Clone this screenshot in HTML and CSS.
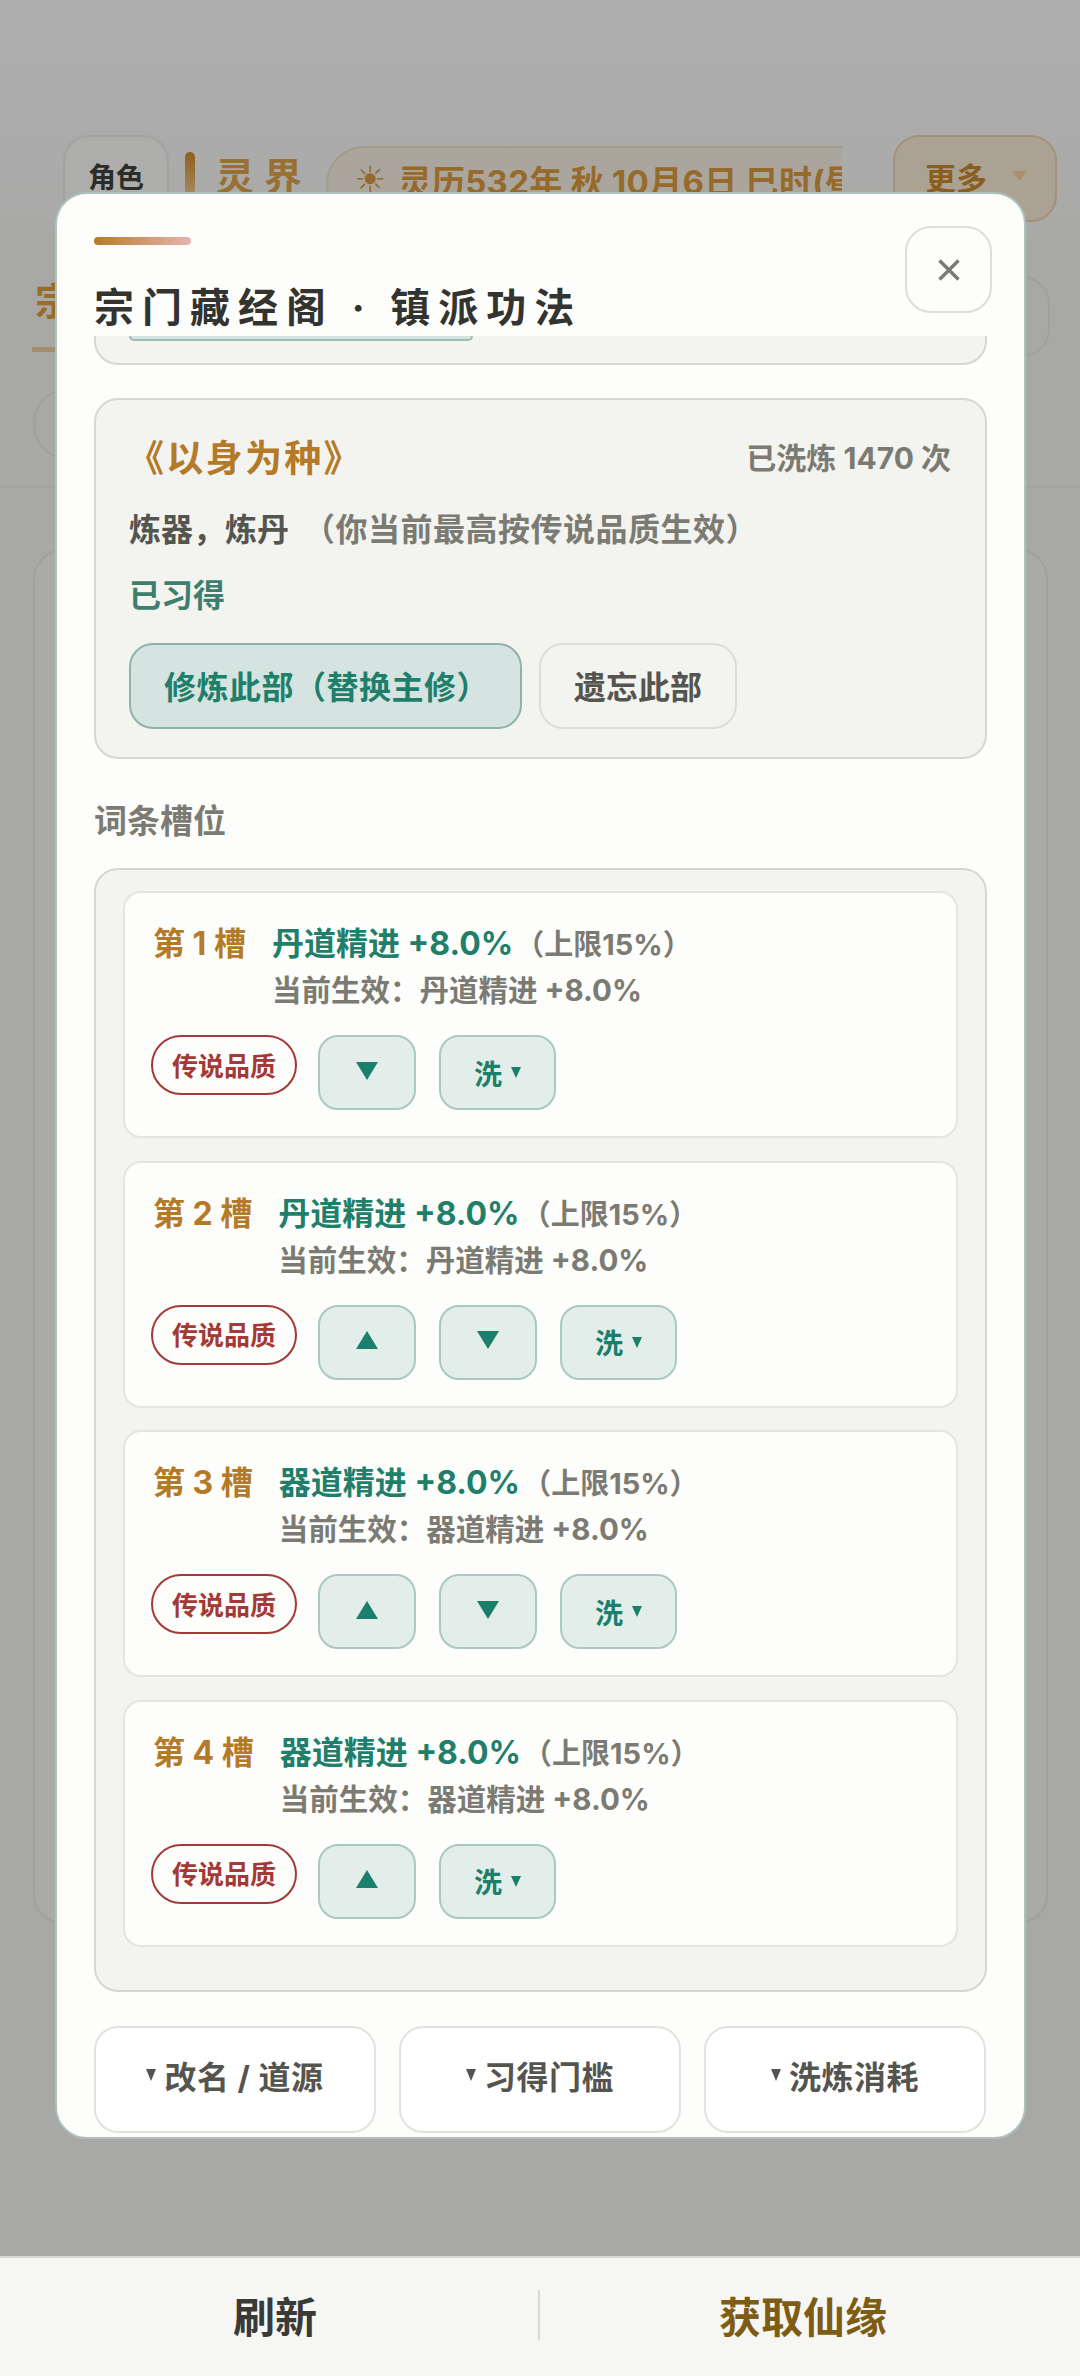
FILE: index.html
```html
<!DOCTYPE html>
<html lang="zh-CN">
<head>
<meta charset="utf-8">
<title>宗门藏经阁</title>
<link rel="stylesheet" href="styles.css">
</head>
<body>
<div class="page">
  <div class="stage">
    <header class="topbar">
      <div class="role-btn">角色</div>
      <div class="realm-bar"></div>
      <div class="realm">灵界</div>
      <div class="date-pill"><span class="sun">☀</span><span>灵历532年 秋 10月6日 巳时(昼间)</span></div>
      <div class="more-btn"><span>更多</span><svg class="more-caret" viewBox="0 0 15 10"><polygon points="0,0 15,0 7.5,10"/></svg></div>
    </header>
    <nav class="tabs">
      <div class="tab">宗门</div>
      <div class="tab-chip"></div>
    </nav>
    <div class="filters"><div class="filter-pill"></div></div>
    <div class="bg-card"></div>

    <section class="modal">
      <div class="modal-head">
        <div class="head-main">
          <div class="accent"></div>
          <h1 class="modal-title">宗门藏经阁 · 镇派功法</h1>
        </div>
        <button class="close"><svg viewBox="0 0 22 22"><path d="M1.5 1.5 20.5 20.5M20.5 1.5 1.5 20.5"/></svg></button>
      </div>
      <div class="modal-body">
        <div class="clip-card"><div class="clip-btn"></div></div>

        <div class="art-card">
          <div class="art-top">
            <div class="art-name">《以身为种》</div>
            <div class="art-count">已洗炼 1470 次</div>
          </div>
          <div class="art-desc"><span class="art-kinds">炼器，炼丹</span><span class="art-note">（你当前最高按传说品质生效）</span></div>
          <div class="art-state">已习得</div>
          <div class="art-actions">
            <button class="btn btn-main">修炼此部（替换主修）</button>
            <button class="btn btn-plain">遗忘此部</button>
          </div>
        </div>

        <h2 class="section-title">词条槽位</h2>

        <div class="slots">
          <article class="slot">
            <div class="slot-top">
              <div class="slot-label">第 1 槽</div>
              <div class="slot-text">
                <div class="slot-name">丹道精进 +8.0%<span class="slot-limit">（上限15%）</span></div>
                <div class="slot-now">当前生效：丹道精进 +8.0%</div>
              </div>
            </div>
            <div class="slot-actions">
              <span class="badge">传说品质</span>
              <button class="tool tool-arrow"><svg class="arrow" viewBox="0 0 22 18"><polygon points="0,0 22,0 11,18"/></svg></button>
              <button class="tool tool-wash">洗<svg class="mini" viewBox="0 0 10 11"><polygon points="0,0 10,0 5,11"/></svg></button>
            </div>
          </article>

          <article class="slot">
            <div class="slot-top">
              <div class="slot-label">第 2 槽</div>
              <div class="slot-text">
                <div class="slot-name">丹道精进 +8.0%<span class="slot-limit">（上限15%）</span></div>
                <div class="slot-now">当前生效：丹道精进 +8.0%</div>
              </div>
            </div>
            <div class="slot-actions">
              <span class="badge">传说品质</span>
              <button class="tool tool-arrow"><svg class="arrow" viewBox="0 0 22 18"><polygon points="11,0 22,18 0,18"/></svg></button>
              <button class="tool tool-arrow"><svg class="arrow" viewBox="0 0 22 18"><polygon points="0,0 22,0 11,18"/></svg></button>
              <button class="tool tool-wash">洗<svg class="mini" viewBox="0 0 10 11"><polygon points="0,0 10,0 5,11"/></svg></button>
            </div>
          </article>

          <article class="slot">
            <div class="slot-top">
              <div class="slot-label">第 3 槽</div>
              <div class="slot-text">
                <div class="slot-name">器道精进 +8.0%<span class="slot-limit">（上限15%）</span></div>
                <div class="slot-now">当前生效：器道精进 +8.0%</div>
              </div>
            </div>
            <div class="slot-actions">
              <span class="badge">传说品质</span>
              <button class="tool tool-arrow"><svg class="arrow" viewBox="0 0 22 18"><polygon points="11,0 22,18 0,18"/></svg></button>
              <button class="tool tool-arrow"><svg class="arrow" viewBox="0 0 22 18"><polygon points="0,0 22,0 11,18"/></svg></button>
              <button class="tool tool-wash">洗<svg class="mini" viewBox="0 0 10 11"><polygon points="0,0 10,0 5,11"/></svg></button>
            </div>
          </article>

          <article class="slot">
            <div class="slot-top">
              <div class="slot-label">第 4 槽</div>
              <div class="slot-text">
                <div class="slot-name">器道精进 +8.0%<span class="slot-limit">（上限15%）</span></div>
                <div class="slot-now">当前生效：器道精进 +8.0%</div>
              </div>
            </div>
            <div class="slot-actions">
              <span class="badge">传说品质</span>
              <button class="tool tool-arrow"><svg class="arrow" viewBox="0 0 22 18"><polygon points="11,0 22,18 0,18"/></svg></button>
              <button class="tool tool-wash">洗<svg class="mini" viewBox="0 0 10 11"><polygon points="0,0 10,0 5,11"/></svg></button>
            </div>
          </article>
        </div>

        <div class="foot-btns">
          <button class="foot-btn"><svg class="foot-caret" viewBox="0 0 10 12"><polygon points="0,0 10,0 5,12"/></svg>改名 / 道源</button>
          <button class="foot-btn"><svg class="foot-caret" viewBox="0 0 10 12"><polygon points="0,0 10,0 5,12"/></svg>习得门槛</button>
          <button class="foot-btn"><svg class="foot-caret" viewBox="0 0 10 12"><polygon points="0,0 10,0 5,12"/></svg>洗炼消耗</button>
        </div>
      </div>
    </section>
  </div>

  <footer class="bottom">
    <div class="bottom-cell bottom-left">刷新</div>
    <div class="bottom-sep"></div>
    <div class="bottom-cell bottom-right">获取仙缘</div>
  </footer>
</div>
</body>
</html>
```

FILE: styles.css
```css
* { box-sizing: border-box; }
html, body { margin: 0; padding: 0; }
body {
  width: 1080px;
  height: 2376px;
  overflow: hidden;
  font-family: Inter, "Noto Sans CJK SC", sans-serif;
  font-weight: 700;
  background: #a8a8a6;
}
button { font: inherit; margin: 0; padding: 0; cursor: pointer; }
h1, h2 { margin: 0; font-weight: 700; }

.page { display: flex; flex-direction: column; height: 2376px; }
.stage {
  position: relative;
  flex: 1;
  overflow: hidden;
  background: #a8a8a6;
}

/* dimmed page behind the dialog */
.topbar {
  height: 237px;
  padding: 135px 23px 14px 63px;
  display: flex;
  align-items: flex-start;
  background: linear-gradient(#aeaeae, #a9a9a8);
  border-bottom: 1px solid #a6a6a4;
}
.role-btn {
  width: 106px;
  height: 87px;
  padding-bottom: 5px;
  border: 2px solid #a2a2a0;
  border-radius: 26px;
  background: #adadab;
  color: #2c2c2a;
  font-size: 28px;
  display: flex;
  align-items: center;
  justify-content: center;
}
.realm-bar {
  width: 10px;
  height: 60px;
  margin: 17px 0 0 16px;
  border-radius: 5px;
  background: linear-gradient(#8f5f1a, #ad9a7d);
}
.realm {
  margin: 16px 0 0 21px;
  width: 110px;
  font-size: 38px;
  line-height: 50px;
  letter-spacing: 10px;
  color: #9a7032;
  white-space: nowrap;
}
.date-pill {
  width: 516px;
  height: 76px;
  margin-top: 11px;
  padding: 0 0 9px 26px;
  display: flex;
  align-items: center;
  gap: 12px;
  overflow: hidden;
  white-space: nowrap;
  border: 2px solid #a69b88;
  border-right: 0;
  border-radius: 38px 0 0 38px;
  background: #aba69d;
  color: #966a2a;
  font-size: 33px;
  letter-spacing: 0.3px;
}
.sun { font-size: 36px; font-family: "DejaVu Sans", sans-serif; }
.more-btn {
  width: 164px;
  height: 87px;
  margin-left: 51px;
  padding: 0 28px 5px 30px;
  display: flex;
  align-items: center;
  justify-content: space-between;
  border: 2px solid #a3927a;
  border-radius: 26px;
  background: #aba294;
  color: #8a5f1e;
  font-size: 31px;
}
.more-caret { width: 15px; height: 10px; fill: #ab8f6a; }

.tabs {
  height: 121px;
  padding: 39px 30px 0 32px;
  display: flex;
  justify-content: space-between;
  align-items: flex-start;
}
.tab {
  height: 76px;
  padding: 0 3px;
  font-size: 38px;
  line-height: 50px;
  color: #9a6c2c;
  border-bottom: 5px solid #a58c6a;
}
.tab-chip {
  width: 120px;
  height: 81px;
  border: 2px solid #a0a09e;
  border-radius: 28px;
}
.filters {
  height: 130px;
  padding: 30px 33px 0;
  border-bottom: 2px solid #a2a2a0;
}
.filter-pill {
  width: 200px;
  height: 72px;
  border: 2px solid #a0a09e;
  border-radius: 36px;
}
.bg-card {
  height: 1375px;
  margin: 61px 32px 0 33px;
  border: 2px solid #a0a09e;
  border-radius: 30px;
  background: #aaaaa8;
}

/* dialog */
.modal {
  position: absolute;
  left: 55px;
  top: 192px;
  width: 971px;
  height: 1947px;
  display: flex;
  flex-direction: column;
  overflow: hidden;
  background: #fdfdfb;
  border: 2px solid #adc0ba;
  border-radius: 32px;
}
.modal-head {
  height: 142px;
  flex: none;
  padding: 32px 32px 0 37px;
  display: flex;
  justify-content: space-between;
  align-items: flex-start;
}
.accent {
  width: 97px;
  height: 8px;
  margin-top: 11px;
  border-radius: 4px;
  background: linear-gradient(90deg, #b87a28, #e8b4ae);
}
.modal-title {
  margin-top: 35px;
  font-size: 40px;
  line-height: 56px;
  letter-spacing: 8px;
  color: #33332f;
  font-weight: 700;
  white-space: nowrap;
}
.close {
  width: 87px;
  height: 87px;
  display: flex;
  align-items: center;
  justify-content: center;
  background: #fdfdfb;
  border: 2px solid #deded9;
  border-radius: 26px;
}
.close svg { width: 22px; height: 22px; fill: none; stroke: #7a7a72; stroke-width: 3.4; }

.modal-body { flex: 1; padding: 0 37px; overflow: hidden; }
.clip-card {
  height: 29px;
  padding-left: 33px;
  background: #f3f3f0;
  border: 2px solid #d6d6d2;
  border-top: 0;
  border-radius: 0 0 24px 24px;
}
.clip-btn {
  width: 344px;
  height: 5px;
  background: #d5e4e0;
  border: 2px solid #9dbcb4;
  border-top: 0;
  border-radius: 0 0 12px 12px;
}
.art-card {
  height: 361px;
  margin-top: 33px;
  padding: 31px 34px 0 33px;
  background: #f3f3f0;
  border: 2px solid #d6d6d2;
  border-radius: 24px;
}
.art-top { display: flex; justify-content: space-between; align-items: center; height: 50px; }
.art-name { font-size: 37px; letter-spacing: 2.3px; margin-left: -2px; color: #b47a28; }
.art-count { font-size: 30px; color: #7b7b73; }
.art-desc { margin-top: 26px; font-size: 32px; line-height: 46px; white-space: nowrap; }
.art-kinds { color: #55554f; }
.art-note { margin-left: 14px; letter-spacing: 0.5px; color: #7b7b73; }
.art-state { margin-top: 21px; font-size: 32px; line-height: 44px; color: #3d7f6c; }
.art-actions { margin-top: 25px; display: flex; gap: 17px; }
.btn {
  height: 86px;
  padding: 0 33px 3px;
  font-size: 32px;
  border-radius: 24px;
  white-space: nowrap;
}
.btn-main { width: 393px; letter-spacing: 0.5px; background: #d5e4e0; border: 2px solid #8fb3aa; color: #1f7f6b; }
.btn-plain { width: 198px; padding: 0 0 3px; background: #f3f3f0; border: 2px solid #dcdcd8; color: #55554f; }

.section-title {
  margin-top: 38px;
  font-size: 33px;
  line-height: 48px;
  color: #7b7b73;
}
.slots {
  height: 1124px;
  margin-top: 23px;
  padding: 21px 27px 0;
  display: flex;
  flex-direction: column;
  gap: 22.6px;
  background: #f3f3f0;
  border: 2px solid #d6d6d2;
  border-radius: 24px;
}
.slot {
  height: 247px;
  flex: none;
  padding: 30px 28px 0;
  background: #fdfdfb;
  border: 2px solid #e4e4e0;
  border-radius: 18px;
}
.slot-top { display: flex; gap: 26px; align-items: flex-start; }
.slot-label { font-size: 32px; line-height: 42px; color: #b47a28; white-space: nowrap; }
.slot-name { font-size: 32px; line-height: 42px; color: #1f7f6b; white-space: nowrap; }
.slot-limit { margin-left: 2px; font-size: 29px; color: #7b7b73; font-weight: 700; }
.slot-now { margin-top: 3px; font-size: 29.5px; line-height: 42px; color: #7b7b73; white-space: nowrap; }
.slot-actions { margin-top: 24px; display: flex; align-items: flex-start; gap: 23px; }
.badge {
  width: 146px;
  height: 60px;
  margin: 0 -2px 0 -2px;
  padding-bottom: 2px;
  display: flex;
  align-items: center;
  justify-content: center;
  font-size: 26px;
  color: #a33a35;
  border: 2px solid #a33a35;
  border-radius: 30px;
}
.tool {
  height: 75px;
  display: flex;
  align-items: center;
  justify-content: center;
  background: #e3eeeb;
  border: 2px solid #a9c9c2;
  border-radius: 20px;
  color: #1a7f6b;
}
.tool-arrow { width: 98px; }
.tool-wash { width: 117px; font-size: 28px; gap: 9px; }
.arrow { width: 22px; height: 18px; fill: #1a7f6b; margin-bottom: 4px; }
.mini { width: 10px; height: 11px; fill: #1a7f6b; }

.foot-btns { margin-top: 34px; display: grid; grid-template-columns: repeat(3, 282px); gap: 23px; }
.foot-btn {
  height: 107px;
  padding-bottom: 9px;
  display: flex;
  align-items: center;
  justify-content: center;
  gap: 8px;
  background: #fff;
  border: 2px solid #e2e2de;
  border-radius: 24px;
  color: #55554f;
  font-size: 32px;
  letter-spacing: 0.5px;
  white-space: nowrap;
}
.foot-caret { width: 10px; height: 12px; fill: #55554f; }

/* bottom bar */
.bottom {
  height: 120px;
  flex: none;
  padding-bottom: 5px;
  display: flex;
  align-items: center;
  background: #f6f7f5;
  border-top: 2px solid #d8d8d5;
}
.bottom-cell { flex: 1; text-align: center; font-size: 42px; }
.bottom-left { color: #3a3a36; padding-left: 12px; }
.bottom-right { color: #7f5c14; padding-right: 14px; }
.bottom-sep { width: 2px; height: 50px; background: #d8d8d5; }
```
